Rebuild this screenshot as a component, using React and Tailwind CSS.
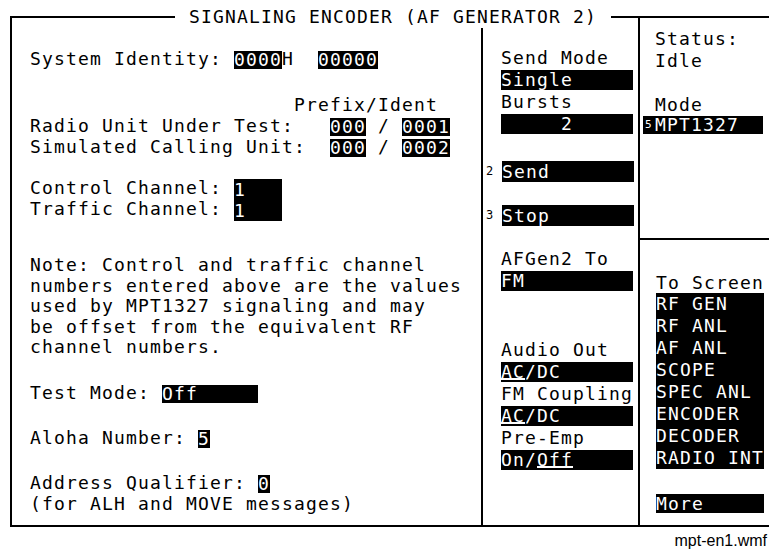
const Hi = ({ children, className = "" }) => (
  <span className={`inline-block align-middle h-[18px] leading-[18px] bg-black text-white ${className}`}>
    {children}
  </span>
);

const Key = ({ n }) => (
  <span className="inline-block w-[19px] pl-[3px] text-[12px] leading-none tracking-normal text-black">
    {n}
  </span>
);

const U = ({ children }) => (
  <span className="inline-block h-[16px] leading-[16px] border-b-2 border-white">{children}</span>
);

function Line({ children, className = "" }) {
  return <div className={`h-[21px] leading-[21px] whitespace-pre ${className}`}>{children}</div>;
}

function Row({ children, className = "" }) {
  return <div className={`h-[22px] leading-[22px] whitespace-pre ${className}`}>{children}</div>;
}

function Box({ children, className = "" }) {
  return (
    <div className="h-[22px] flex items-center">
      <div className={`w-[132px] h-[20px] leading-[19px] bg-black text-white whitespace-pre ${className}`}>
        {children}
      </div>
    </div>
  );
}

export default function App() {
  return (
    <div className="w-[769px] h-[549px] bg-white relative overflow-hidden text-black font-['DejaVu_Sans_Mono',monospace] text-[18px] tracking-[1.16px]">
      <div className="absolute left-[10px] top-[16px] w-[759px] h-[511px] border-t-2 border-l-2 border-b-2 border-black flex">
        {/* title over the top rule */}
        <div className="absolute left-[163px] top-[-12px] h-[22px] leading-[22px] bg-white px-[14px] whitespace-pre">
          SIGNALING ENCODER (AF GENERATOR 2)
        </div>

        {/* left column */}
        <div className="w-[469px] pl-[18px] pt-[30px]">
          <Line>
            System Identity: <Hi>0000</Hi>H  <Hi>00000</Hi>
          </Line>
          <Line className="mt-[25px]">{"                      Prefix/Ident"}</Line>
          <Line>
            Radio Unit Under Test:   <Hi>000</Hi> / <Hi>0001</Hi>
          </Line>
          <Line>
            Simulated Calling Unit:  <Hi>000</Hi> / <Hi>0002</Hi>
          </Line>
          <Line className="mt-[20px]">
            Control Channel: <Hi className="h-[21px] leading-[21px]">{"1   "}</Hi>
          </Line>
          <Line>
            Traffic Channel: <Hi className="h-[21px] leading-[21px]">{"1   "}</Hi>
          </Line>
          <div className="mt-[36px] leading-[20.5px] whitespace-pre">
            <div>Note: Control and traffic channel</div>
            <div>numbers entered above are the values</div>
            <div>used by MPT1327 signaling and may</div>
            <div>be offset from the equivalent RF</div>
            <div>channel numbers.</div>
          </div>
          <Line className="mt-[24px]">
            Test Mode: <Hi>{"Off     "}</Hi>
          </Line>
          <Line className="mt-[24px]">
            Aloha Number: <Hi>5</Hi>
          </Line>
          <Line className="mt-[24px]">
            Address Qualifier: <Hi>0</Hi>
          </Line>
          <Line>(for ALH and MOVE messages)</Line>
        </div>

        {/* middle column */}
        <div className="w-[157px] mt-[10px] border-l-2 border-black pl-[18px] pt-[19px]">
          <Row>Send Mode</Row>
          <Box>Single</Box>
          <Row>Bursts</Row>
          <Box>{"     2"}</Box>
          <div className="mt-[25px] flex items-center ml-[-18px] h-[22px]">
            <Key n="2" />
            <div className="w-[132px] h-[21px] leading-[21px] bg-black text-white">Send</div>
          </div>
          <div className="mt-[22px] flex items-center ml-[-18px] h-[22px]">
            <Key n="3" />
            <div className="w-[132px] h-[21px] leading-[21px] bg-black text-white">Stop</div>
          </div>
          <Row className="mt-[22px]">AFGen2 To</Row>
          <Box>FM</Box>
          <Row className="mt-[47px]">Audio Out</Row>
          <Box>
            <U>AC</U>/DC
          </Box>
          <Row>FM Coupling</Row>
          <Box>
            <U>AC</U>/DC
          </Box>
          <Row>Pre-Emp</Row>
          <Box>
            On/<U>Off</U>
          </Box>
        </div>

        {/* right column */}
        <div className="flex-1 border-l-2 border-black flex flex-col">
          <div className="h-[222px] border-b-2 border-black pl-[15px] pt-[10px]">
            <Line>Status:</Line>
            <Line className="mt-[1px]">Idle</Line>
            <Line className="mt-[23px]">Mode</Line>
            <div className="flex items-center ml-[-12px] h-[20px]">
              <div className="w-[120px] h-[18px] leading-[18px] bg-black text-white flex items-center">
                <span className="text-[11px] w-[12px] pl-[2px] tracking-normal">5</span>
                <span>MPT1327</span>
              </div>
            </div>
          </div>
          <div className="pl-[16px] pt-[32px]">
            <Line>To Screen</Line>
            <div className="w-[108px] bg-black text-white leading-[22px] whitespace-pre">
              <div>RF GEN</div>
              <div>RF ANL</div>
              <div>AF ANL</div>
              <div>SCOPE</div>
              <div>SPEC ANL</div>
              <div>ENCODER</div>
              <div>DECODER</div>
              <div>RADIO INT</div>
            </div>
            <div className="mt-[25px] w-[108px] h-[19px] leading-[19px] bg-black text-white">More</div>
          </div>
        </div>
      </div>

      <div className="absolute right-[2px] top-[532px] font-['Liberation_Sans',Arial,sans-serif] text-[16px] tracking-normal leading-[18px]">
        mpt-en1.wmf
      </div>
    </div>
  );
}
